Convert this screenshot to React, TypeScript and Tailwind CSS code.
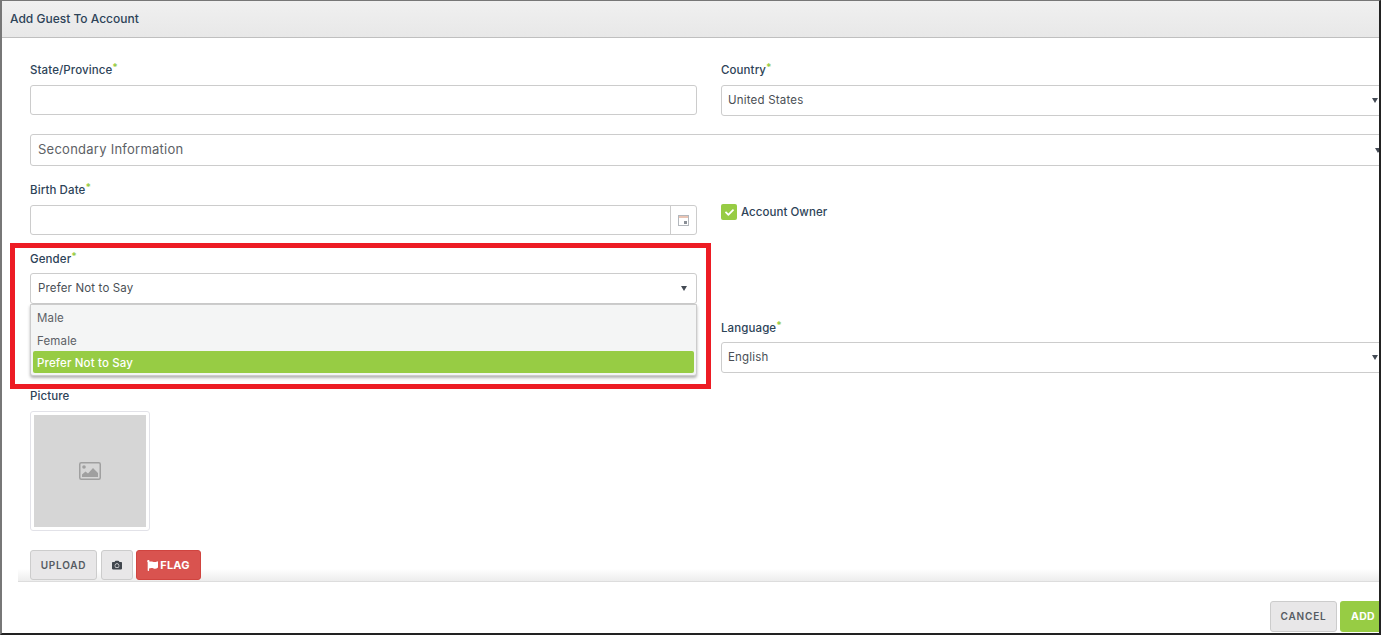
import { FaCamera, FaCheck, FaFlag } from 'react-icons/fa';

const Caret = ({ className = '' }: { className?: string }) => (
    <span className={`w-0 h-0 border-l-[3.5px] border-r-[3.5px] border-t-[5px] border-l-transparent border-r-transparent border-t-[#444b55] ${className}`}></span>
);

const Label = ({ text, required = true }: { text: string; required?: boolean }) => (
    <label className="block h-[16px] text-[11.5px] leading-[18px] font-medium tracking-[0.1px] text-[#2d4358]">
        {text}
        {required && <sup className="text-[#97cc44] text-[10px] font-bold top-[-3px]">*</sup>}
    </label>
);

const SelectBox = ({ value }: { value: string }) => (
    <div className="h-[31px] flex items-center justify-between pl-[6px] pr-[9px] bg-white border border-[#cccccc] rounded-[3px] text-[11.5px] text-[#4a4f55]">
        <span className="tracking-[0.2px]">{value}</span>
        <Caret />
    </div>
);

const App = () => {
    return (
        <div className="relative w-[1381px] h-[635px] overflow-hidden bg-white border-l-2 border-r-2 border-b-2 border-t border-l-[#777777] border-t-[#777777] border-r-[#222222] border-b-[#222222] font-['Inter',sans-serif] flex flex-col">
            <div className="h-[37px] shrink-0 flex items-center pl-[8px] pb-[1px] bg-gradient-to-b from-[#f0f0f0] to-[#e8e8e8] border-b border-[#bfbfbf] text-[12px] font-medium text-[#2d4358]">
                Add Guest To Account
            </div>

            <div className="flex-1 min-h-0 w-[1420px] pl-[28px] pt-[23px]">
                <div className="grid grid-cols-[667px_667px] gap-x-[24px]">
                    <div>
                        <Label text="State/Province" />
                        <div className="mt-[8px] h-[30px] bg-white border border-[#cccccc] rounded-[3px]"></div>
                    </div>
                    <div>
                        <Label text="Country" />
                        <div className="mt-[8px]">
                            <SelectBox value="United States" />
                        </div>
                    </div>
                </div>

                <div className="mt-[18px] w-[1362px] h-[32px] flex items-center justify-between pl-[7px] pr-[10px] border border-[#cccccc] rounded-[3px] text-[13px] text-[#5d6166] tracking-[0.25px]">
                    <span>Secondary Information</span>
                    <Caret />
                </div>

                <div className="mt-[15px] grid grid-cols-[667px_667px] gap-x-[24px]">
                    <div>
                        <Label text="Birth Date" />
                        <div className="mt-[8px] h-[30px] flex justify-end bg-white border border-[#cccccc] rounded-[3px]">
                            <div className="w-[26px] flex items-center justify-center border-l border-[#cccccc]">
                                <svg width="11" height="11" viewBox="0 0 11 11" fill="none">
                                    <rect x="0.5" y="0.5" width="10" height="10" stroke="#b3b7bc" />
                                    <rect x="1" y="1" width="9" height="2" fill="#e9c4b4" />
                                    <rect x="6" y="6" width="3" height="3" fill="#8a8f96" />
                                </svg>
                            </div>
                        </div>
                    </div>
                    <div className="pt-[23px] flex items-start">
                        <span className="w-[16px] h-[16px] flex items-center justify-center rounded-[2px] bg-[#97cc44] text-white text-[9px]">
                            <FaCheck />
                        </span>
                        <span className="ml-[4px] text-[11.5px] leading-[16px] font-medium tracking-[0.05px] text-[#2d4358]">Account Owner</span>
                    </div>
                </div>

                <div className="mt-[15px] grid grid-cols-[667px_667px] gap-x-[24px]">
                    <div className="relative">
                        <Label text="Gender" />
                        <div className="mt-[7px]">
                            <div className="h-[31px] flex items-center justify-between pl-[7px] pr-[9px] bg-white border border-[#cccccc] rounded-[3px] text-[11.5px] text-[#4a4f55]">
                                <span className="tracking-[0.15px]">Prefer Not to Say</span>
                                <Caret />
                            </div>
                        </div>
                        <div className="absolute left-0 right-0 top-[54px] h-[72px] p-[2px] pt-[1px] bg-[#f4f5f5] border border-[#cccccc] rounded-b-[3px] shadow-[0_2px_3px_rgba(0,0,0,0.3)] text-[11.5px] tracking-[0.15px] text-[#5d6166] z-10">
                            <div className="h-[23px] pl-[4px] pt-[2px] flex items-center">Male</div>
                            <div className="h-[22px] pl-[4px] pt-[3px] flex items-center">Female</div>
                            <div className="h-[22px] pl-[4px] pt-[3px] flex items-center bg-[#97cc44] text-white rounded-[2px] font-medium">Prefer Not to Say</div>
                        </div>
                    </div>
                </div>

                <div className="mt-[15px] ml-[691px] w-[667px]">
                    <Label text="Language" />
                    <div className="mt-[7px]">
                        <SelectBox value="English" />
                    </div>
                </div>

                <div className="mt-[14px]">
                    <Label text="Picture" required={false} />
                    <div className="mt-[8px] w-[120px] h-[120px] p-[3px] bg-white border border-[#e2e2e8] rounded-[3px]">
                        <div className="w-full h-full flex items-center justify-center bg-[#d6d6d6]">
                            <svg width="22" height="18" viewBox="0 0 22 18">
                                <rect x="0.75" y="0.75" width="20.5" height="16.5" rx="1.5" fill="none" stroke="#a0a0a0" strokeWidth="1.5" />
                                <circle cx="5" cy="5" r="1.8" fill="#a0a0a0" />
                                <path d="M3 15v-2.5l3.5-3 2.5 2 5-5.5 5 5v4z" fill="#a0a0a0" />
                            </svg>
                        </div>
                    </div>
                </div>

                <div className="relative z-10 mt-[19px] flex items-start gap-[4px]">
                    <button className="w-[67px] h-[30px] bg-[#e8e7e8] border border-[#cccccc] rounded-[3px] text-[10px] font-semibold tracking-[0.75px] text-[#555b62]">UPLOAD</button>
                    <button className="w-[32px] h-[30px] flex items-center justify-center bg-[#e8e7e8] border border-[#cccccc] rounded-[3px] text-[10px] text-[#40464d]">
                        <FaCamera />
                    </button>
                    <button className="-ml-[1px] w-[65px] h-[30px] flex items-center justify-center gap-[2px] bg-[#d9534f] border border-[#d0443f] rounded-[3px] text-[11px] font-bold tracking-[0.2px] text-white">
                        <FaFlag />
                        FLAG
                    </button>
                </div>
            </div>

            <div className="relative h-[52px] shrink-0 ml-[16px] -mr-[7px] border-t border-[#dddddd] flex items-start justify-end pt-[19px] gap-[3px] bg-white">
                <div className="absolute left-0 right-0 top-[-13px] h-[12px] bg-gradient-to-b from-transparent to-[#ededed]"></div>
                <button className="w-[67px] h-[31px] bg-[#e8e7e8] border border-[#cccccc] rounded-[3px] text-[10px] font-semibold tracking-[0.85px] text-[#555b62]">CANCEL</button>
                <button className="w-[46px] h-[31px] bg-[#97cc44] rounded-[3px] text-[10.5px] font-bold tracking-[0.3px] text-white">ADD</button>
            </div>

            <div className="absolute left-[8px] top-[242px] w-[701px] h-[146px] border-[5px] border-[#ed1c24] pointer-events-none z-20"></div>
        </div>
    );
};

export default App;
